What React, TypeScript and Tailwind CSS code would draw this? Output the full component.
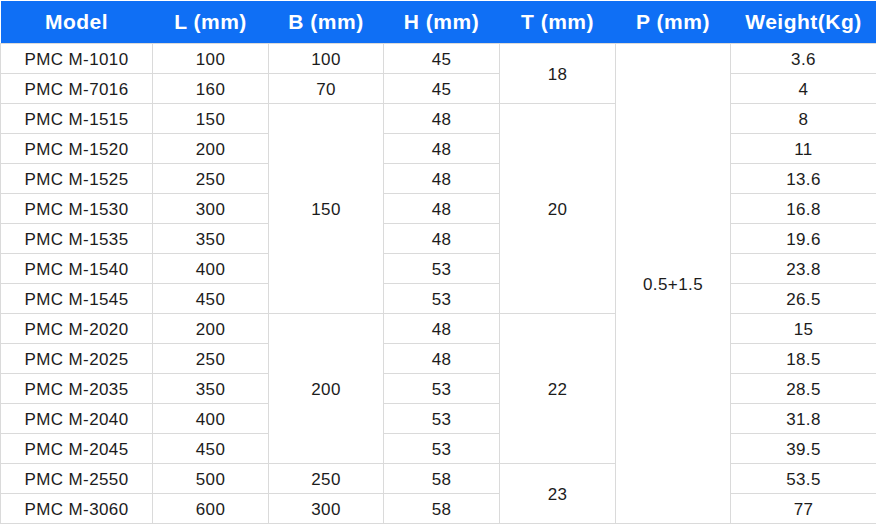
import React from "react";

type Cell = { v: string; span?: number } | null;

// null = covered by a rowspan above
const rows: Cell[][] = [
  [{ v: "PMC M-1010" }, { v: "100" }, { v: "100" }, { v: "45" }, { v: "18", span: 2 }, { v: "0.5+1.5", span: 16 }, { v: "3.6" }],
  [{ v: "PMC M-7016" }, { v: "160" }, { v: "70" }, { v: "45" }, null, null, { v: "4" }],
  [{ v: "PMC M-1515" }, { v: "150" }, { v: "150", span: 7 }, { v: "48" }, { v: "20", span: 7 }, null, { v: "8" }],
  [{ v: "PMC M-1520" }, { v: "200" }, null, { v: "48" }, null, null, { v: "11" }],
  [{ v: "PMC M-1525" }, { v: "250" }, null, { v: "48" }, null, null, { v: "13.6" }],
  [{ v: "PMC M-1530" }, { v: "300" }, null, { v: "48" }, null, null, { v: "16.8" }],
  [{ v: "PMC M-1535" }, { v: "350" }, null, { v: "48" }, null, null, { v: "19.6" }],
  [{ v: "PMC M-1540" }, { v: "400" }, null, { v: "53" }, null, null, { v: "23.8" }],
  [{ v: "PMC M-1545" }, { v: "450" }, null, { v: "53" }, null, null, { v: "26.5" }],
  [{ v: "PMC M-2020" }, { v: "200" }, { v: "200", span: 5 }, { v: "48" }, { v: "22", span: 5 }, null, { v: "15" }],
  [{ v: "PMC M-2025" }, { v: "250" }, null, { v: "48" }, null, null, { v: "18.5" }],
  [{ v: "PMC M-2035" }, { v: "350" }, null, { v: "53" }, null, null, { v: "28.5" }],
  [{ v: "PMC M-2040" }, { v: "400" }, null, { v: "53" }, null, null, { v: "31.8" }],
  [{ v: "PMC M-2045" }, { v: "450" }, null, { v: "53" }, null, null, { v: "39.5" }],
  [{ v: "PMC M-2550" }, { v: "500" }, { v: "250" }, { v: "58" }, { v: "23", span: 2 }, null, { v: "53.5" }],
  [{ v: "PMC M-3060" }, { v: "600" }, { v: "300" }, { v: "58" }, null, null, { v: "77" }],
];

const headers = ["Model", "L (mm)", "B (mm)", "H (mm)", "T (mm)", "P (mm)", "Weight(Kg)"];
const widths = [152, 116, 115, 116, 116, 115, 146];

export default function App() {
  return (
    <div className="w-[876px] h-[526px] bg-white pt-px overflow-hidden" style={{ fontFamily: '"Liberation Sans", Arial, sans-serif' }}>
      <table className="w-[876px] table-fixed border-collapse">
        <colgroup>
          {widths.map((w, i) => (
            <col key={i} style={{ width: w }} />
          ))}
        </colgroup>
        <thead>
          <tr className="bg-[#0f6ff5]">
            {headers.map((h) => (
              <th key={h} className="h-[42px] p-0 text-center text-[21px] font-bold tracking-[0.5px] text-white">
                {h}
              </th>
            ))}
          </tr>
        </thead>
        <tbody>
          {rows.map((r, ri) => (
            <tr key={ri}>
              {r.map((c, ci) =>
                c ? (
                  <td
                    key={ci}
                    rowSpan={c.span}
                    className="h-[30px] p-0 pt-[2px] border border-[#dadada] text-center align-middle text-[17px] leading-none tracking-[0.4px] text-[#1c1c1c]"
                  >
                    {c.v}
                  </td>
                ) : null
              )}
            </tr>
          ))}
        </tbody>
      </table>
    </div>
  );
}
